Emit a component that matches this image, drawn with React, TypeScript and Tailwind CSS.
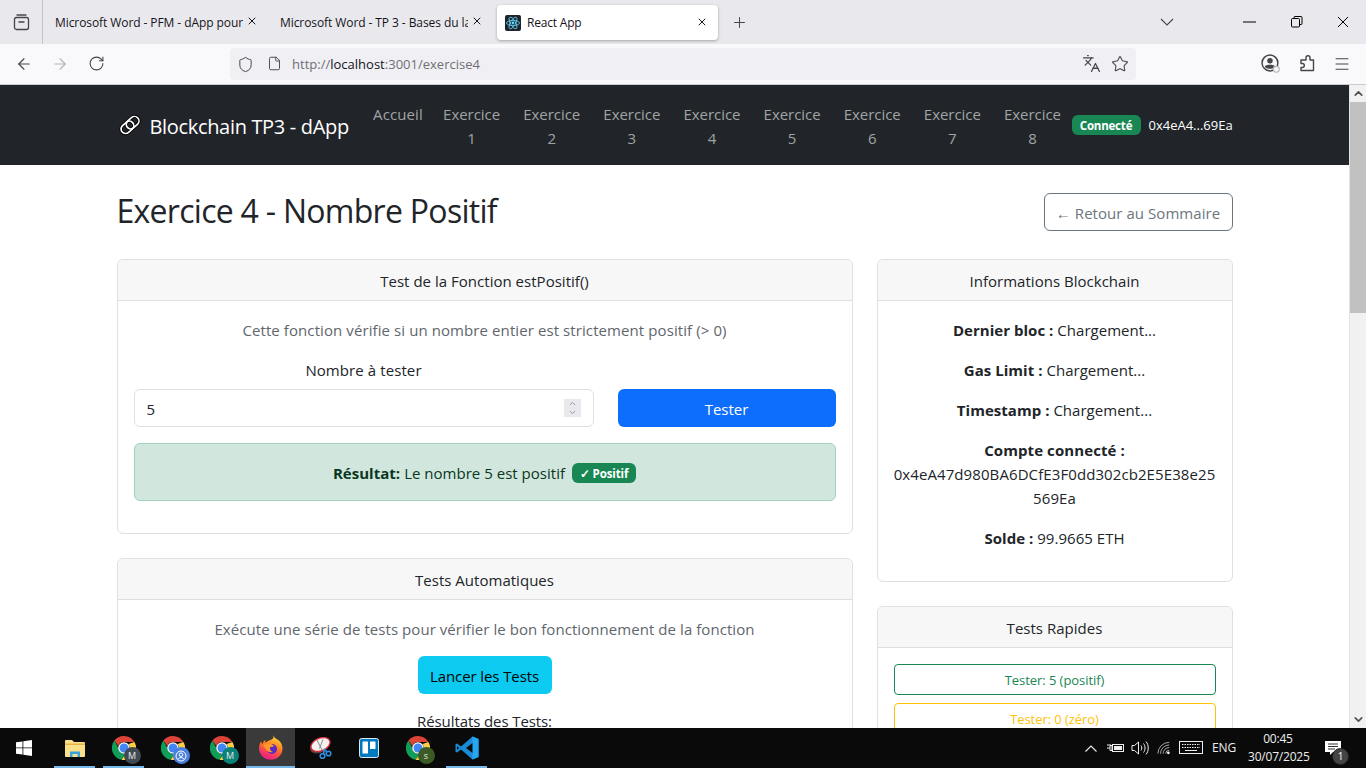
import React from "react";
import { X, Plus, ArrowLeft, ArrowRight, RotateCw, ChevronDown, ChevronUp, Star, Shield, File, Menu, Languages } from "lucide-react";

function Chrome({ badge, bg }: { badge?: React.ReactNode; bg?: string }) {
  return (
    <div className="relative w-6 h-6">
      <svg width="24" height="24" viewBox="0 0 24 24">
        <path d="M12 0a12 12 0 0 1 10.4 6H12a6 6 0 0 0-5.7 4L2.4 4.6A12 12 0 0 1 12 0z" fill="#db4437" />
        <path d="M2.4 4.6 6.4 12a6 6 0 0 0 6.8 5.9L9.6 23.8A12 12 0 0 1 2.4 4.6z" fill="#0f9d58" />
        <path d="M22.4 6A12 12 0 0 1 9.6 23.8l4.2-6.2A6 6 0 0 0 16.5 8l5.9-2z" fill="#ffcd40" />
        <circle cx="12" cy="12" r="5.8" fill="#fff" />
        <circle cx="12" cy="12" r="4.5" fill="#4285f4" />
      </svg>
      {badge && (
        <div className={`absolute -right-[5px] -bottom-[4px] w-[17px] h-[17px] rounded-full flex items-center justify-center text-[9px] text-[#e8e8e8] ${bg}`}>{badge}</div>
      )}
    </div>
  );
}

function Tab({ text }: { text: string }) {
  return (
    <div className="w-[225px] h-[44px] flex items-center pl-[12px] pt-[1px] relative shrink-0">
      <span className="w-[188px] overflow-hidden whitespace-nowrap text-[12px] text-[#15141a] tracking-[-0.08px]">{text}</span>
      <X size={12} strokeWidth={2} className="absolute left-[203px] top-[15px] text-[#15141a]" />
    </div>
  );
}

function BrowserChrome() {
  return (
    <div className="shrink-0">
      <div className="h-[44px] bg-[#e9e9ed] flex items-center relative">
        <div className="w-[43px] h-[44px] flex items-center justify-center border-r border-[#c4c4c8] shrink-0">
          <svg width="17" height="17" viewBox="0 0 17 17" fill="none" stroke="#45454a" strokeWidth="1.3">
            <rect x="1.5" y="3.5" width="14" height="12" rx="2" />
            <path d="M3.5 1h10M5.5 8h6" />
          </svg>
        </div>
        <Tab text="Microsoft Word - PFM - dApp pour" />
        <Tab text="Microsoft Word - TP 3 - Bases du lang" />
        <div className="absolute left-[497px] top-[5px] w-[221px] h-[35px] bg-white rounded-[4px] shadow-[0_1px_3px_rgba(0,0,0,0.3)] flex items-center pl-2">
          <svg width="16" height="16" viewBox="0 0 16 16">
            <rect width="16" height="16" rx="2" fill="#20232a" />
            <g fill="none" stroke="#61dafb" strokeWidth="0.8">
              <ellipse cx="8" cy="8" rx="6.5" ry="2.6" />
              <ellipse cx="8" cy="8" rx="6.5" ry="2.6" transform="rotate(60 8 8)" />
              <ellipse cx="8" cy="8" rx="6.5" ry="2.6" transform="rotate(120 8 8)" />
            </g>
            <circle cx="8" cy="8" r="1.4" fill="#61dafb" />
          </svg>
          <span className="ml-1.5 text-[12px] text-[#15141a] tracking-[-0.2px]">React App</span>
          <X size={12} strokeWidth={2} className="absolute left-[199px] top-[11px] text-[#15141a]" />
        </div>
        <Plus size={17} strokeWidth={1.4} className="absolute left-[731px] top-[14px] text-[#45454a]" />
        <svg width="14" height="8" viewBox="0 0 14 8" fill="none" stroke="#45454a" strokeWidth="1.1" className="absolute left-[1160px] top-[18px]">
          <path d="M1 1l6 6 6-6" />
        </svg>
        <svg width="13" height="2" viewBox="0 0 13 2" className="absolute left-[1243px] top-[21px]">
          <path d="M0 1h13" stroke="#000" strokeWidth="1" />
        </svg>
        <svg width="12" height="12" viewBox="0 0 12 12" fill="none" stroke="#000" className="absolute left-[1291px] top-[16px]">
          <rect x="0.5" y="2.5" width="8" height="8.5" rx="1" />
          <path d="M3 2.5V1.5a1 1 0 0 1 1-1h6a1 1 0 0 1 1 1v6a1 1 0 0 1-1 1H8.5" />
        </svg>
        <svg width="12" height="12" viewBox="0 0 12 12" stroke="#000" className="absolute left-[1337px] top-[16px]">
          <path d="M1 1l10 10M11 1L1 11" />
        </svg>
      </div>
      <div className="h-[41px] bg-[#f9f9fb] border-b border-[#ccccd0] flex items-center relative">
        <ArrowLeft size={18} strokeWidth={1.5} className="absolute left-[15px] top-[11px] text-[#45454a]" />
        <ArrowRight size={18} strokeWidth={1.5} className="absolute left-[51px] top-[11px] text-[#b4b4b8]" />
        <RotateCw size={17} strokeWidth={1.5} className="absolute left-[88px] top-[11px] text-[#45454a]" />
        <div className="absolute left-[230px] top-[4px] w-[906px] h-[32px] bg-[#f0f0f4] rounded-[4px] flex items-center">
          <Shield size={17} strokeWidth={1.4} className="absolute left-[7px] top-[8px] text-[#45454a]" />
          <File size={15} strokeWidth={1.5} className="absolute left-[37px] top-[8px] text-[#45454a]" />
          <span className="ml-[62px] pt-[1px] text-[13px] text-[#6f6f74] tracking-[0.01px]">
            http://<span className="text-[#15141a]">localhost</span>:3001/exercise4
          </span>
          <Languages size={19} strokeWidth={1.6} className="absolute left-[852px] top-[6px] text-[#45454a]" />
          <Star size={18} strokeWidth={1.4} className="absolute left-[881px] top-[7px] text-[#45454a]" />
        </div>
        <svg width="19" height="19" viewBox="0 0 18 18" className="absolute left-[1261px] top-[10px]">
          <circle cx="8.500" cy="8.500" r="7.500" fill="none" stroke="#45454a" strokeWidth="1.4" />
          <circle cx="8.500" cy="6.500" r="2.600" fill="#45454a" />
          <path d="M3.500 12c1-2.400 9-2.400 10 0-2 2.600-8 2.600-10 0z" fill="#45454a" />
          <circle cx="14.500" cy="14.500" r="2.800" fill="#f9f9fb" stroke="#b4b4b8" />
        </svg>
        <svg width="18" height="18" viewBox="0 0 18 18" fill="none" stroke="#45454a" strokeWidth="1.4" strokeLinejoin="round" className="absolute left-[1298px] top-[10px]">
          <path d="M3 6h5V3.800a2 2 0 0 1 4 0V6h3.500v10.500H3V13.500h1.300a2 2 0 0 0 0-4H3z" />
        </svg>
        <Menu size={18} strokeWidth={1.4} className="absolute left-[1333px] top-[11px] text-[#45454a]" />
      </div>
    </div>
  );
}

function Navbar() {
  const nums = [1, 2, 3, 4, 5, 6, 7, 8];
  return (
    <nav className="h-[80px] bg-[#212529] shrink-0">
      <div className="w-[1140px] mx-auto px-3 h-full flex items-center">
        <div className="w-[248px] shrink-0 flex items-center text-[20px] text-white whitespace-nowrap tracking-[-0.33px] pt-[3px]">
          <svg width="22" height="22" viewBox="0 0 22 22" fill="none" className="mr-[9px] ml-[2px] shrink-0 -mt-[3px]">
            <g transform="rotate(-42 11 11)">
              <rect x="0.500" y="6.500" width="14" height="9" rx="4.500" stroke="#000" strokeWidth="3.400" />
              <rect x="7.500" y="6.500" width="14" height="9" rx="4.500" stroke="#000" strokeWidth="3.400" />
              <rect x="0.500" y="6.500" width="14" height="9" rx="4.500" stroke="#fff" strokeWidth="1.700" />
              <rect x="7.500" y="6.500" width="14" height="9" rx="4.500" stroke="#fff" strokeWidth="1.700" />
            </g>
          </svg>
          Blockchain TP3 - dApp
        </div>
        <div className="w-[67px] shrink-0 text-center text-[15px] leading-6 text-[#a0a3a6] h-[64px] pt-[9px] tracking-[0.1px]">Accueil</div>
        {nums.map((n) => (
          <div key={n} className="w-[80.14px] shrink-0 h-[64px] pt-[9px] text-center text-[15px] leading-6 text-[#a0a3a6] tracking-[-0.05px]">
            Exercice<br />{n}
          </div>
        ))}
        <span className="-ml-[1px] w-[69px] h-[20px] pt-[2px] rounded-[6px] bg-[#198754] text-white text-[11.5px] font-bold flex items-center justify-center shrink-0 tracking-[-0.2px]">Connecté</span>
        <span className="ml-2 pt-[2px] text-[13px] text-white whitespace-nowrap">0x4eA4...69Ea</span>
      </div>
    </nav>
  );
}

function Card({ title, children }: { title: string; children: React.ReactNode }) {
  return (
    <div className="border border-[#dfdfdf] rounded-[6px] bg-white text-center">
      <div className="h-[41px] pt-[3px] bg-[#f7f7f7] border-b border-[#dfdfdf] rounded-t-[6px] flex items-center justify-center text-[#212529] text-[15px] tracking-[0.02px]">
        {title}
      </div>
      <div className="p-4">{children}</div>
    </div>
  );
}

function Info({ label, children }: { label: string; children: React.ReactNode }) {
  return (
    <p className="pt-[1px] mb-[15px] text-[15px] leading-6 text-[#212529] tracking-[0.03px] break-all">
      <b className="font-bold">{label} :</b> {children}
    </p>
  );
}

function Content() {
  return (
    <div className="w-[1140px] mx-auto px-3 pt-7">
      <div className="flex items-center justify-between h-[38px] mb-[28px]">
        <h2 className="text-[32px] leading-[36px] -mt-[3px] text-[#212529] tracking-[-0.72px]">Exercice 4 - Nombre Positif</h2>
        <div className="w-[189px] h-[38px] pt-[2px] border border-[#6c757d] rounded-[6px] text-[#6c757d] text-[15px] flex items-center justify-center tracking-[0.05px]">
          ← Retour au Sommaire
        </div>
      </div>
      <div className="flex gap-6 items-start">
        <div className="w-[736px] shrink-0 flex flex-col gap-6">
          <Card title="Test de la Fonction estPositif()">
            <p className="pt-[1px] text-[15px] leading-6 text-[#5f666d] mb-[15px] tracking-[0.09px]">
              Cette fonction vérifie si un nombre entier est strictement positif (&gt; 0)
            </p>
            <div className="flex gap-6 items-end">
              <div className="w-[460px] shrink-0">
                <div className="pt-[1px] text-[15px] leading-6 text-[#212529] mb-[7px] tracking-[0.09px]">Nombre à tester</div>
                <div className="h-[38px] border border-[#dee2e6] rounded-[6px] px-3 flex items-center justify-between text-[15px] text-[#212529]">
                  <span className="pt-[2px]">5</span>
                  <span className="w-[17px] h-[18px] bg-[#e9e9ed] flex flex-col items-center justify-center text-[#808085]">
                    <ChevronUp size={9} strokeWidth={2} />
                    <ChevronDown size={9} strokeWidth={2} />
                  </span>
                </div>
              </div>
              <div className="flex-1 h-[38px] pt-[2px] rounded-[6px] bg-[#0d6efd] text-white text-[15px] flex items-center justify-center">Tester</div>
            </div>
            <div className="mt-4 mb-4 h-[58px] border border-[#a3cfbb] bg-[#d1e7dd] rounded-[6px] flex items-center justify-center text-[15px] text-[#0a3622] tracking-[0.02px]">
              <b className="font-bold pt-[2px]">Résultat:</b>
              <span className="ml-1 pt-[2px]">Le nombre 5 est positif</span>
              <span className="ml-[7px] mt-[2px] w-[64px] h-[20px] pt-[1px] rounded-[6px] bg-[#198754] text-white text-[11.5px] font-bold flex items-center justify-center tracking-[-0.1px]">✓ Positif</span>
            </div>
          </Card>
          <Card title="Tests Automatiques">
            <p className="pt-[1px] text-[15px] leading-6 text-[#5f666d] mb-[15px] tracking-[0.06px]">
              Exécute une série de tests pour vérifier le bon fonctionnement de la fonction
            </p>
            <div className="mx-auto w-[134px] h-[38px] pt-[2px] rounded-[6px] bg-[#0dcaf0] text-black text-[15px] flex items-center justify-center tracking-[-0.1px]">Lancer les Tests</div>
            <div className="mt-[15px] text-[15px] leading-6 text-[#212529] tracking-[-0.1px]">Résultats des Tests:</div>
          </Card>
        </div>
        <div className="w-[356px] shrink-0 flex flex-col gap-6">
          <Card title="Informations Blockchain">
            <Info label="Dernier bloc">Chargement...</Info>
            <Info label="Gas Limit">Chargement...</Info>
            <Info label="Timestamp">Chargement...</Info>
            <p className="pt-[1px] mb-[15px] text-[15px] leading-6 text-[#212529] tracking-[0.09px] break-all">
              <b className="font-bold">Compte connecté :</b><br />0x4eA47d980BA6DCfE3F0dd302cb2E5E38e25569Ea
            </p>
            <Info label="Solde">99.9665 ETH</Info>
          </Card>
          <Card title="Tests Rapides">
            <div className="h-[31px] pt-[2px] mb-2 border border-[#198754] rounded-[4px] text-[#198754] text-[13px] flex items-center justify-center tracking-[-0.06px]">Tester: 5 (positif)</div>
            <div className="h-[31px] pt-[2px] mb-2 border border-[#ffc107] rounded-[4px] text-[#ffc107] text-[13px] flex items-center justify-center tracking-[-0.06px]">Tester: 0 (zéro)</div>
          </Card>
        </div>
      </div>
    </div>
  );
}

function Scrollbar() {
  return (
    <div className="w-[17px] shrink-0 bg-[#f1f1f1] flex flex-col border-l border-[#e4e4e4]">
      <div className="h-[17px] flex items-center justify-center text-[#505050]">
        <ChevronUp size={13} strokeWidth={3} />
      </div>
      <div className="h-[211px] bg-[#c1c1c1]" />
      <div className="flex-1" />
      <div className="h-[17px] flex items-center justify-center text-[#505050]">
        <ChevronDown size={13} strokeWidth={3} />
      </div>
    </div>
  );
}

function Slot({ active, line, children }: { active?: boolean; line?: boolean; children: React.ReactNode }) {
  return (
    <div className={`relative w-[49px] h-[40px] flex items-center justify-center shrink-0 ${active ? "bg-[#3a3a3a]" : ""}`}>
      {children}
      {line && <div className={`absolute bottom-0 h-[2px] bg-[#76b9ed] ${active ? "left-0 right-0" : "left-1 right-1"}`} />}
    </div>
  );
}

function Taskbar() {
  return (
    <div className="h-[40px] bg-[#0a0a0a] shrink-0 flex items-center relative">
      <div className="w-[50px] flex justify-center shrink-0 -ml-[1px] mr-[1px]">
        <svg width="16" height="16" viewBox="0 0 16 16" fill="#fff">
          <path d="M0 2.300 6.500 1.400V7.500H0zM7.300 1.300 16 0V7.500H7.300zM0 8.300H6.500V14.500L0 13.700zM7.300 8.300H16V16L7.300 14.700z" />
        </svg>
      </div>
      <Slot line>
        <svg width="22" height="20" viewBox="0 0 22 20">
          <path d="M1 3a1 1 0 0 1 1-1h6l2 2h10a1 1 0 0 1 1 1v13a1 1 0 0 1-1 1H2a1 1 0 0 1-1-1z" fill="#fbe08a" />
          <path d="M1 5.500h20v1.500H1z" fill="#e2b44c" />
          <path d="M6 13.500h10v5.500h-2.500v-3h-5v3H6z" fill="#3aa0e0" />
        </svg>
      </Slot>
      <Slot line><Chrome badge="M" bg="bg-[#3f4a52]" /></Slot>
      <Slot>
        <Chrome badge={
          <svg width="12" height="12" viewBox="0 0 12 12" fill="none" stroke="#fff"><circle cx="6" cy="6" r="5" /><circle cx="6" cy="4.700" r="1.800" /><path d="M2.800 9.500c.8-2.500 5.600-2.500 6.400 0" /></svg>
        } bg="bg-[#4a7fe0]" />
      </Slot>
      <Slot><Chrome badge="M" bg="bg-[#0b8277]" /></Slot>
      <Slot active line>
        <svg width="24" height="25" viewBox="0 0 24 25" className="-mt-[1px]">
          <defs>
            <linearGradient id="ff" x1="0.700" y1="0" x2="0.300" y2="1">
              <stop offset="0" stopColor="#ffdd3a" />
              <stop offset="0.450" stopColor="#ff7a1f" />
              <stop offset="0.800" stopColor="#f5316a" />
              <stop offset="1" stopColor="#e6218a" />
            </linearGradient>
          </defs>
          <path d="M14.500 0c.3 2.500 2 3.500 4 4.500 3.500 2 5 5.500 5 9a11.700 11.300 0 0 1-23.400 0c0-2.500.5-5 2-7C2.500 7.500 3 8.500 3.800 9 4 7 5 5.500 6.500 5c-.5 1-.5 2 0 2.500C9 5.500 12.500 5 14 3.500c.5-1 .7-2 .5-3.500z" fill="url(#ff)" />
          <circle cx="13" cy="14" r="5" fill="#5b2bc5" />
          <path d="M4 10.500c3-2.500 9-2.500 11 .5-1 1-3 1.200-4 1-.5 2 .5 4.500 3 5-3 1-6.500-.5-7.500-3.500C6 12.500 5 11.500 4 10.500z" fill="#ff9a2a" />
        </svg>
      </Slot>
      <Slot>
        <svg width="24" height="24" viewBox="0 0 24 24">
          <ellipse cx="11.500" cy="10.500" rx="10" ry="6.500" transform="rotate(-22 11.500 10.500)" fill="#5c3a3d" />
          <ellipse cx="12.500" cy="8.500" rx="10" ry="6.300" transform="rotate(-22 12.500 8.500)" fill="#f4f1f1" stroke="#d9303a" strokeWidth="1.300" />
          <path d="M9 4l5 10M15 3.500l-3.500 9" stroke="#8a8a8a" strokeWidth="1" />
          <circle cx="14.500" cy="20" r="2.300" fill="none" stroke="#2f8fe0" strokeWidth="1.600" />
          <circle cx="20.500" cy="17.500" r="2.300" fill="none" stroke="#2f8fe0" strokeWidth="1.600" />
          <path d="M15.500 18l1-5M19 16l-3-3" stroke="#2f8fe0" strokeWidth="1.600" fill="none" />
        </svg>
      </Slot>
      <Slot>
        <svg width="20" height="20" viewBox="0 0 20 20">
          <rect x="0.500" y="0.500" width="19" height="19" rx="2" fill="#0079bf" stroke="#dbe9f3" />
          <rect x="3.500" y="3.500" width="5.500" height="12" rx="0.500" fill="#fff" />
          <rect x="11" y="3.500" width="5.500" height="7.500" rx="0.500" fill="#fff" />
        </svg>
      </Slot>
      <Slot><Chrome badge="s" bg="bg-[#3c5a24]" /></Slot>
      <Slot line>
        <svg width="24" height="24" viewBox="0 0 24 24">
          <path d="M17.500 0.500 23.500 3v18l-6 2.500L6 13.500 2 16.500 0.500 15.700V8.300L2 7.500l4 3z" fill="#1a8ad4" />
          <path d="M17.500 0.500 23.500 3v18l-6 2.500V17L11 12l6.500-5z" fill="#24a7f0" />
          <path d="M17.500 7 11 12l6.500 5z" fill="#0a0a0a" />
          <path d="M2 10.200 4.200 12 2 13.800z" fill="#0a0a0a" />
        </svg>
      </Slot>
      <div className="absolute right-0 top-0 h-[40px] w-[285px] text-white">
        <svg width="12" height="7" viewBox="0 0 12 7" fill="none" stroke="#eee" strokeWidth="1.100" className="absolute left-[4px] top-[17px]">
          <path d="M0.500 6.500 6 1l5.500 5.500" />
        </svg>
        <svg width="18" height="14" viewBox="0 0 18 14" fill="none" stroke="#eee" className="absolute left-[26px] top-[13px]">
          <rect x="5.500" y="3.500" width="11" height="7" />
          <rect x="7" y="5" width="8" height="4" fill="#eee" stroke="none" />
          <path d="M0 7h3M3 4.500h2v5H3zM1 5v-2M3 5V3" />
        </svg>
        <svg width="18" height="16" viewBox="0 0 18 16" fill="none" stroke="#eee" className="absolute left-[50px] top-[12px]">
          <path d="M1 5.500h2.500l4-3.500v12l-4-3.500H1zM10 5.500c1 1.500 1 3.500 0 5M12.500 3.500c2 2.500 2 6.500 0 9M15 1.500c3 3.500 3 9.500 0 13" />
        </svg>
        <svg width="14" height="14" viewBox="0 0 16 16" fill="none" stroke="#bbb" className="absolute left-[76px] top-[13px]">
          <path d="M1 14.500a13 13 0 0 1 13-13M4 14.500a10 10 0 0 1 10-10M7 14.500a7 7 0 0 1 7-7M10 14.500a4 4 0 0 1 4-4" />
          <circle cx="13" cy="13.500" r="1.500" fill="#fff" stroke="none" />
        </svg>
        <svg width="24" height="14" viewBox="0 0 24 14" fill="none" stroke="#eee" className="absolute left-[98px] top-[13px]">
          <rect x="0.500" y="0.500" width="23" height="12" />
          <path d="M3 3.500h18M3 6.500h18" strokeDasharray="1.500 1" />
          <path d="M6 9.500h12" />
        </svg>
        <span className="absolute left-[131px] top-[12px] text-[12px] leading-4 tracking-[-0.15px] text-[#eee]">ENG</span>
        <div className="absolute left-[167px] top-[2px] w-[60px] text-center text-[12px] leading-[18px] tracking-[-0.2px] text-[#eee]">
          00:45<br />30/07/2025
        </div>
        <svg width="16" height="15" viewBox="0 0 16 15" className="absolute left-[244px] top-[13px]">
          <path d="M0 0h16v11H8l-3 3v-3H0z" fill="#fff" />
          <path d="M3 3h10M3 5.500h10M3 8h7" stroke="#333" />
        </svg>
        <div className="absolute left-[251px] top-[20px] w-[17px] h-[17px] rounded-full bg-[#444] border border-[#222] text-[10px] flex items-center justify-center text-white">1</div>
      </div>
    </div>
  );
}

export default function App() {
  return (
    <div className="h-screen overflow-hidden flex flex-col font-['Open_Sans',sans-serif]">
      <BrowserChrome />
      <div className="flex-1 min-h-0 flex">
        <div className="flex-1 min-w-0 overflow-hidden flex flex-col">
          <Navbar />
          <Content />
        </div>
        <Scrollbar />
      </div>
      <Taskbar />
    </div>
  );
}
